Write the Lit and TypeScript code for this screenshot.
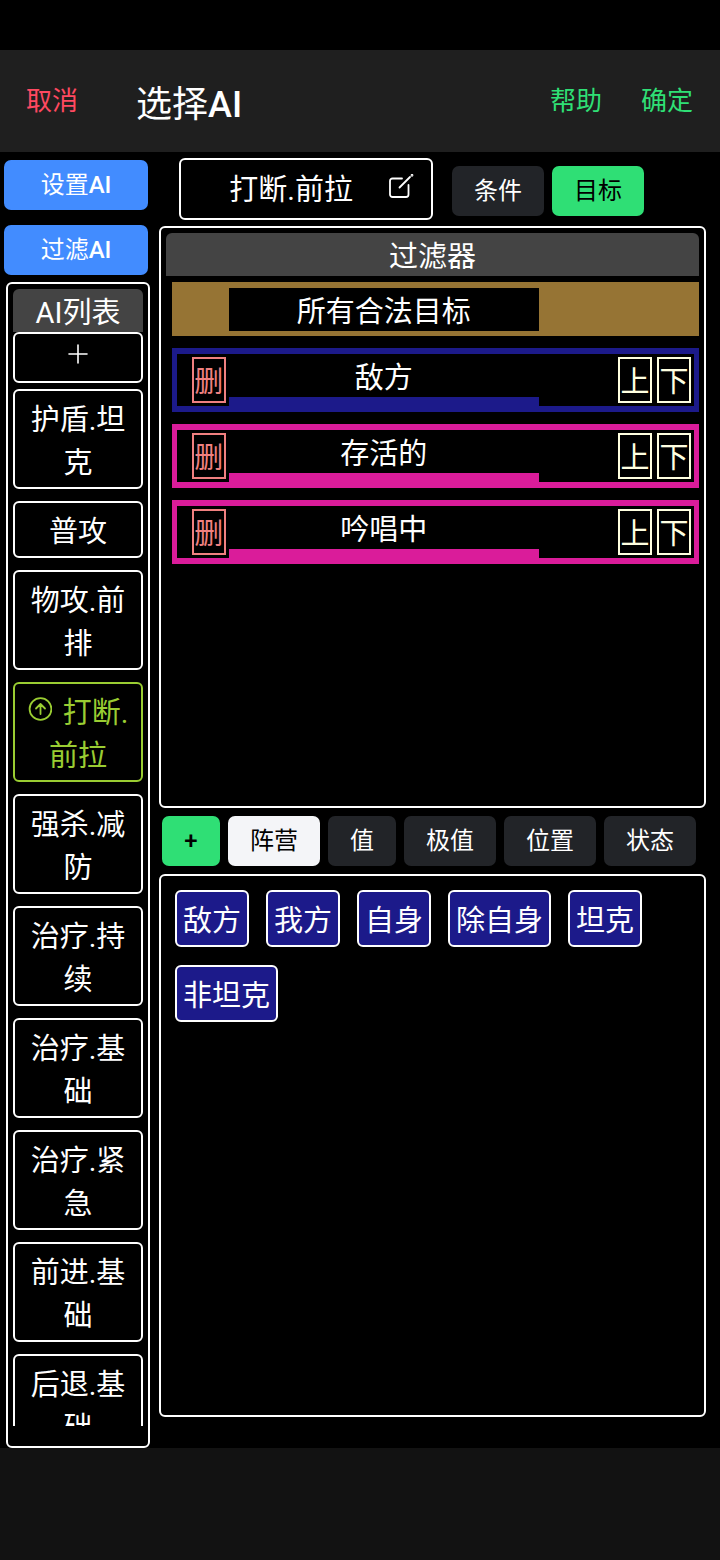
import { LitElement, html, css, nothing } from "lit";
import { customElement, property, state } from "lit/decorators.js";
import { classMap } from "lit/directives/class-map.js";

const shared = css`
  * {
    box-sizing: border-box;
  }
  button {
    margin: 0;
    padding: 0;
    border: 0;
    background: none;
    color: inherit;
    font: inherit;
    cursor: pointer;
  }
  svg {
    fill: none;
    stroke: currentColor;
    stroke-linecap: round;
    stroke-linejoin: round;
  }
`;

/** One filter line: delete on the left, label in the middle, move buttons on the right. */
@customElement("filter-row")
export class FilterRow extends LitElement {
  @property() label = "";
  @property({ reflect: true }) tone = "all";
  @property({ type: Boolean }) locked = false;

  static styles = [
    shared,
    css`
      :host {
        display: grid;
        grid-template-columns: 1fr 6fr 3fr;
        align-items: start;
        padding: 6px 5px 5px;
        background: #967434;
      }
      :host([tone="camp"]) {
        padding-bottom: 6px;
        background: #1c1a8a;
      }
      :host([tone="state"]) {
        padding-bottom: 6px;
        background: #da1c9a;
      }
      .label {
        padding-top: 6px;
        background: #000;
        text-align: center;
        line-height: 37px;
      }
      .cell {
        display: flex;
        justify-content: flex-end;
        gap: 5px;
        padding: 3px;
        background: #000;
      }
      .box {
        width: 34px;
        height: 46px;
        padding-top: 5px;
        border: 2px solid #ffffe0;
        color: #ffffe0;
        line-height: 37px;
      }
      .delete {
        border-color: #f08080;
        color: #f08080;
      }
    `,
  ];

  render() {
    return html`
      ${this.locked
        ? html`<span></span>`
        : html`<div class="cell"><button class="box delete">删</button></div>`}
      <div class="label">${this.label}</div>
      ${this.locked
        ? nothing
        : html`<div class="cell">
            <button class="box">上</button>
            <button class="box">下</button>
          </div>`}
    `;
  }
}

@customElement("app-root")
export class AppRoot extends LitElement {
  @state() private current = 3;
  @state() private mode = "目标";
  @state() private category = "阵营";

  private entries = [
    "护盾.坦克",
    "普攻",
    "物攻.前排",
    "打断.前拉",
    "强杀.减防",
    "治疗.持续",
    "治疗.基础",
    "治疗.紧急",
    "前进.基础",
    "后退.基础",
  ];
  private filters = [
    { label: "所有合法目标", tone: "all", locked: true },
    { label: "敌方", tone: "camp", locked: false },
    { label: "存活的", tone: "state", locked: false },
    { label: "吟唱中", tone: "state", locked: false },
  ];
  private categories = ["阵营", "值", "极值", "位置", "状态"];
  private options = ["敌方", "我方", "自身", "除自身", "坦克", "非坦克"];

  static styles = [
    shared,
    css`
      :host {
        display: flex;
        flex-direction: column;
        box-sizing: border-box;
        height: 100vh;
        padding-top: 50px;
        background: #000;
        color: #fff;
        font: 400 29px/43px Roboto, "Noto Sans CJK SC", sans-serif;
      }
      header {
        display: flex;
        align-items: center;
        flex: none;
        height: 102px;
        padding: 0 27px 0 26px;
        background: #1f1f1f;
      }
      h1 {
        flex: 1;
        margin: 0 0 0 58px;
        padding-top: 8px;
        font-size: 36px;
        font-weight: 400;
      }
      .latin {
        font-weight: 500;
      }
      .link {
        font-size: 26px;
        color: #2fdf75;
      }
      .link + .link {
        margin-left: 39px;
      }
      .cancel {
        color: #ff4961;
      }
      main {
        display: grid;
        grid-template-columns: 150px minmax(0, 1fr);
        grid-template-rows: minmax(0, 1fr);
        flex: 1;
        min-height: 0;
        gap: 9px;
        padding-right: 14px;
      }
      footer {
        flex: none;
        height: 112px;
        background: #121212;
      }
      aside,
      section {
        display: flex;
        flex-direction: column;
        min-height: 0;
      }
      .btn {
        flex: none;
        height: 50px;
        padding: 0 22px;
        border-radius: 7px;
        background: #222428;
        font-size: 24px;
        line-height: 50px;
      }
      .blue {
        margin: 0 2px 15px 4px;
        background: #428cff;
      }
      .green {
        background: #2fdf75;
        color: #000;
      }
      .light {
        background: #f4f5f8;
        color: #000;
      }
      .panel {
        border: 2px solid #fff;
        border-radius: 6px;
        padding: 5px;
      }
      aside {
        padding: 8px 0 0;
      }
      .list-panel {
        display: flex;
        flex: 1;
        flex-direction: column;
        min-height: 0;
        margin: -8px 0 0 6px;
        padding-bottom: 20px;
      }
      h2 {
        flex: none;
        margin: 0;
        padding-top: 6px;
        border-radius: 6px 6px 0 0;
        background: #444;
        text-align: center;
        font-size: 29px;
        line-height: 37px;
        font-weight: 400;
      }
      .list {
        display: flex;
        flex-direction: column;
        gap: 12px;
        min-height: 0;
        margin: 0;
        padding: 0;
        overflow: hidden;
        list-style: none;
      }
      .entry {
        display: block;
        width: 100%;
        padding: 8px 5px 2px;
        border: 2px solid #fff;
        border-radius: 6px;
      }
      .entry.active {
        border-color: #9acd32;
        color: #9acd32;
      }
      .entry svg {
        width: 24px;
        height: 24px;
        margin-right: 4px;
        vertical-align: 2px;
      }
      .add {
        flex: none;
        height: 51px;
        margin-bottom: 6px;
        padding: 0 0 7px;
        line-height: 0;
      }
      .add svg {
        width: 20px;
        height: 20px;
        margin: 0;
      }
      section {
        padding: 6px 0 31px;
      }
      .bar {
        display: flex;
        flex: none;
      }
      .modes {
        align-items: flex-end;
        gap: 8px;
        margin-bottom: 6px;
        padding-left: 20px;
      }
      .modes .btn {
        margin-bottom: 4px;
      }
      .name {
        display: flex;
        align-items: center;
        justify-content: flex-end;
        width: 254px;
        height: 62px;
        margin-right: 11px;
        padding: 2px 17px 0 0;
        border: 2px solid #fff;
        border-radius: 6px;
        gap: 36px;
      }
      .name svg {
        width: 25px;
        height: 25px;
        margin-bottom: 8px;
      }
      .tabs {
        gap: 8px;
        padding: 8px 3px;
      }
      .plus {
        width: 58px;
        font-weight: 500;
      }
      .filters {
        flex: 568 1 0;
        min-height: 0;
      }
      .rows {
        display: flex;
        flex-direction: column;
        gap: 12px;
        padding: 6px 0 0 6px;
      }
      .options {
        display: flex;
        flex: 511 1 0;
        flex-wrap: wrap;
        align-content: flex-start;
        gap: 18px 17px;
        min-height: 0;
        padding: 14px;
      }
      .chip {
        height: 57px;
        padding: 8px 6px 2px;
        border: 2px solid #fff;
        border-radius: 6px;
        background: #1c1a8a;
      }
    `,
  ];

  render() {
    return html`
      <header>
        <button class="link cancel">取消</button>
        <h1>选择<span class="latin">AI</span></h1>
        <button class="link">帮助</button>
        <button class="link">确定</button>
      </header>
      <main>
        <aside>
          <button class="btn blue">设置<span class="latin">AI</span></button>
          <button class="btn blue">过滤<span class="latin">AI</span></button>
          <div class="panel list-panel">
            <h2>AI列表</h2>
            <button class="entry add" aria-label="+">
              <svg viewBox="0 0 20 20" stroke-width="1.6">
                <path d="M10 1v18M1 10h18" />
              </svg>
            </button>
            <ul class="list">
              ${this.entries.map(
                (name, i) => html`<li>
                  <button
                    class=${classMap({ entry: true, active: i === this.current })}
                    @click=${() => (this.current = i)}
                  >
                    ${i === this.current
                      ? html`<svg viewBox="0 0 24 24" stroke-width="1.8">
                          <circle cx="12.500" cy="12" r="10.900" />
                          <path d="M12.500 17V7.500M8 11.500 12.500 7l4.500 4.500" />
                        </svg>`
                      : nothing}
                    ${name}
                  </button>
                </li>`
              )}
            </ul>
          </div>
        </aside>
        <section>
          <div class="bar modes">
            <button class="name">
              <span>${this.entries[this.current]}</span>
              <svg viewBox="0 0 25 25" stroke-width="1.8">
                <path d="M13 4.500H3.500A2.500 2.500 0 0 0 1 7V20.500A2.500 2.500 0 0 0 3.500 23H17A2.500 2.500 0 0 0 19.500 20.500V11" />
                <path d="M10.500 13.500 21 3" />
                <circle cx="23" cy="1.300" r="0.500" />
              </svg>
            </button>
            ${["条件", "目标"].map(
              (m) => html`<button
                class=${classMap({ btn: true, green: m === this.mode })}
                @click=${() => (this.mode = m)}
              >
                ${m}
              </button>`
            )}
          </div>
          <div class="panel filters">
            <h2>过滤器</h2>
            <div class="rows">
              ${this.filters.map(
                (f) => html`<filter-row
                  .label=${f.label}
                  .tone=${f.tone}
                  .locked=${f.locked}
                ></filter-row>`
              )}
            </div>
          </div>
          <div class="bar tabs">
            <button class="btn green plus">+</button>
            ${this.categories.map(
              (c) => html`<button
                class=${classMap({ btn: true, light: c === this.category })}
                @click=${() => (this.category = c)}
              >
                ${c}
              </button>`
            )}
          </div>
          <div class="panel options">
            ${this.options.map((o) => html`<button class="chip">${o}</button>`)}
          </div>
        </section>
      </main>
      <footer></footer>
    `;
  }
}
